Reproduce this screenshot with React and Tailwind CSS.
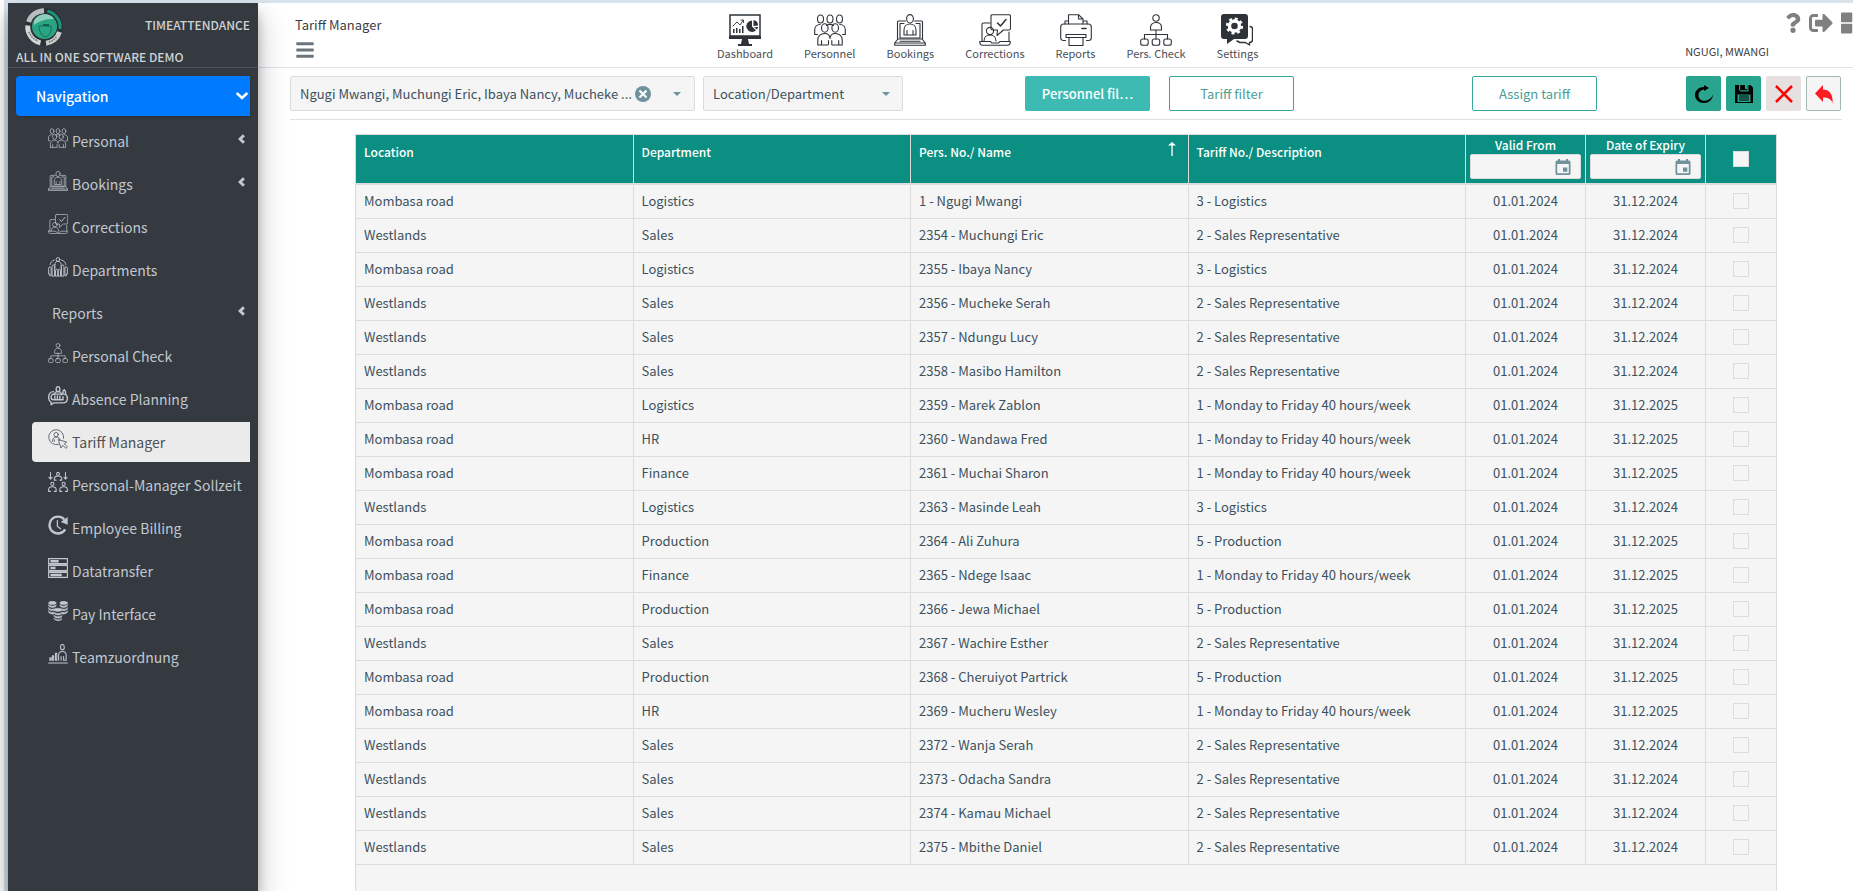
import { useState } from 'react'
import { FaBars, FaQuestion, FaSignOutAlt, FaThLarge } from 'react-icons/fa'

const Svg = ({ className, children, strokeWidth = 1.1 }) => (
  <svg viewBox="0 0 32 32" className={className} fill="none" stroke="currentColor" strokeWidth={strokeWidth} strokeLinecap="round" strokeLinejoin="round" aria-hidden="true">
    {children}
  </svg>
)

const DashboardIcon = ({ className }) => (
  <Svg className={className}>
    <path d="M1 1h30v21H1z" strokeWidth="1.500" strokeLinejoin="miter" />
    <path d="M0 22h32v3H0zM13 25h6l1 5h3v2H9v-2h3z" fill="currentColor" stroke="none" />
    <path d="M4 15h1.500v4H4zM7 14h1.500v5H7zM10 15h1.500v4H10zM13 12h1.500v7H13z" fill="currentColor" stroke="none" />
    <path d="M4 12l4-4 3 3 3-4.500M12 6h2.500v2.500" strokeWidth=".9" />
    <path d="M23 6.500a5.700 5.700 0 1 0 4 9.800L23 12.500z" fill="currentColor" stroke="none" />
    <path d="M24.500 6a5.500 5.500 0 0 1 4.500 5.500l-4.500.5zM25 13.300l4-.4a5 5 0 0 1-1 2.500z" fill="currentColor" stroke="none" />
  </Svg>
)

const PersonnelIcon = ({ className }) => (
  <Svg className={className}>
    <ellipse cx="6.500" cy="5" rx="3" ry="4" />
    <ellipse cx="16" cy="5" rx="3" ry="4" />
    <ellipse cx="25.500" cy="5" rx="3" ry="4" />
    <path d="M3.500 20.500H.700v-4.500c0-3 2-5.500 5.500-5.500M28.500 20.500h2.800v-4.500c0-3-2-5.500-5.500-5.500M12.500 11.500c2-1.300 5-1.300 7 0" />
    <ellipse cx="10.800" cy="14" rx="3.300" ry="4.200" />
    <ellipse cx="21.200" cy="14" rx="3.300" ry="4.200" />
    <path d="M3.800 31v-5.500c0-3.500 3-6 7-6s5 2.500 5.200 5c.2-2.500 1.500-5 5.200-5s7 2.500 7 6V31h-10M3.800 31h10M7.500 30.500v-4M14.500 30.500v-4M17.800 30.500v-4M24.700 30.500v-4" />
  </Svg>
)

const BookingsIcon = ({ className }) => (
  <Svg className={className}>
    <ellipse cx="16" cy="4.800" rx="3.400" ry="4.200" />
    <path d="M10 21v-5c0-3.500 2.500-6 6-6s6 2.500 6 6v5zM13 20.500v-4M19 20.500v-4" />
    <path d="M11.500 7H4.500C4 7 3.500 7.500 3.500 8v17h25V8c0-.5-.5-1-1-1h-7" />
    <path d="M10 9.500H6V24h20V9.500h-4" />
    <path d="M3.500 25.500L.700 29v2.300h30.600V29l-2.800-3.500M1 29h30M6 27.300h20" />
  </Svg>
)

const CorrectionsIcon = ({ className }) => (
  <Svg className={className}>
    <path d="M13.500.700H30c1 0 1.500.5 1.500 1.200v12.600c0 1-.5 1.500-1.500 1.500h-5.500L18 21.500l.5-5.500H13.500c-1 0-1.500-.5-1.500-1.500V1.900c0-.7.5-1.200 1.500-1.200z" />
    <path d="M18.500 9l3 3 5.500-6.500" strokeWidth="1.500" />
    <path d="M11 9H4.500C3.500 9 3 9.500 3 10.500V27M30 18v9" />
    <circle cx="11" cy="17" r="3.600" />
    <path d="M5 27c0-3.500 2.500-6 6-6s6 2.500 6 6" />
    <path d="M.700 27.500h11l1 1.500h7l1-1.500h10.600c0 2.500-.8 3.800-3 3.800H3.700c-2.200 0-3-1.300-3-3.800z" />
  </Svg>
)

const PrinterIcon = ({ className }) => (
  <Svg className={className}>
    <path d="M8.500 10V.700h10L23 5v5M18.500.700V5H23M5 10V7h3M27 10V7h-3.500" />
    <path d="M5.500 26.500H3.500C2 26.500.700 25.500.700 24V13c0-1.700 1-3 3-3h24.600c2 0 3 1.300 3 3v11c0 1.500-1.300 2.500-2.800 2.500h-2" />
    <path d="M22 14.500h4" strokeWidth="1.600" />
    <path d="M6 20.500h20v3H6zM9 23.500h14v8H9z" />
  </Svg>
)

const OrgIcon = ({ className }) => (
  <Svg className={className}>
    <circle cx="16" cy="4" r="3.200" />
    <path d="M10.500 16v-2.500c0-3 2.300-5 5.500-5s5.500 2 5.500 5V16zM16 16v9M4.500 25v-4.500h23V25" />
    <rect x=".7" y="25" width="7.500" height="6.300" rx="2" />
    <rect x="12.200" y="25" width="7.500" height="6.300" rx="2" />
    <rect x="23.800" y="25" width="7.500" height="6.300" rx="2" />
  </Svg>
)

const SettingsIcon = ({ className }) => (
  <Svg className={className}>
    <path d="M3 0h21a3 3 0 0 1 3 3v19a3 3 0 0 1-3 3H13l-7 5v-5H3a3 3 0 0 1-3-3V3a3 3 0 0 1 3-3z" fill="currentColor" stroke="none" />
    <circle cx="13.500" cy="12" r="5" stroke="#fff" strokeWidth="3.400" />
    <circle cx="13.500" cy="12" r="7.200" stroke="#fff" strokeWidth="2.800" strokeDasharray="2.830 2.830" strokeLinecap="butt" />
    <path d="M29 12.500c2 0 2.500 1 2.500 2.500v11c0 2-1 2.500-3 2.500V31l-4-2.500h-5.500l-3-1.500" strokeWidth="1.400" />
  </Svg>
)

const DepartmentsIcon = ({ className }) => (
  <Svg className={className} strokeWidth={1.500}>
    <circle cx="16" cy="4" r="3" />
    <path d="M11 12c0-3 2-5 5-5s5 2 5 5v6M11 12v6M10 5C6 6 4 9 3.500 12M22 5c4 1 6 4 6.500 7" />
    <path d="M1 27V18c0-3 4-3 4 0v12H2.500v-3M6.500 30V15c0-3 4-3 4 0v15zM12 30V21c0-2 3.500-2 3.500 0v9zM16.500 30V21c0-2 3.500-2 3.500 0v9zM21.500 30V15c0-3 4-3 4 0v15zM31 27V18c0-3-4-3-4 0v12h2.500v-3" />
  </Svg>
)

const AbsenceIcon = ({ className }) => (
  <Svg className={className} strokeWidth={2.200}>
    <ellipse cx="16" cy="5" rx="3" ry="4" />
    <path d="M10 14c0-3 3-5 6-5s6 2 6 5M24 12V8l2-2 2 3v5M9 9c-5 0-8 4-8 9s2 7 4 8v4l4-3h15c4 0 7-2 7-7s-3-7-6-7H9c-3 0-4 2-4 5s2 4 4 4h15" />
    <path d="M11 16v5M15 16v5M19 16v5M24 17v4" />
  </Svg>
)

const TariffIcon = ({ className }) => (
  <Svg className={className} strokeWidth={1.300}>
    <path d="M17 24.500A12 12 0 1 1 25 15" />
    <circle cx="13" cy="9" r="3.500" />
    <path d="M7 20c0-4 2-7 6-7s6 2 6 5M10 20v-3" />
    <path d="M17 17l13 4-4 2.500 5 5-2.500 2.500-5-5L21 30z" />
  </Svg>
)

const TargetTimeIcon = ({ className }) => (
  <Svg className={className} strokeWidth={1.700}>
    <circle cx="16" cy="3" r="2.300" />
    <path d="M10 13v-2c0-3 2.500-4.500 6-4.500s6 1.500 6 4.500v2h-3M10 13h3M4 1v10M1.500 8.500L4 11.500l2.500-3M28 1v10M25.500 8.500l2.500 3 2.500-3" />
    <circle cx="7" cy="19" r="2.500" />
    <circle cx="25" cy="19" r="2.500" />
    <path d="M1 31v-3c0-3 2.500-4.500 6-4.500s6 1.500 6 4.500v3h-3M1 31h3M19 31v-3c0-3 2.500-4.500 6-4.500s6 1.500 6 4.500v3h-3M19 31h3" />
  </Svg>
)

const BillingIcon = ({ className }) => (
  <Svg className={className} strokeWidth={3.800}>
    <path d="M27.500 23A13.500 13.500 0 1 1 26 7" strokeLinecap="butt" />
    <path d="M31.500 3v12.500L20.500 11z" fill="currentColor" stroke="none" />
    <path d="M15 9v9l5 4" strokeWidth="2" />
  </Svg>
)

const DataIcon = ({ className }) => (
  <Svg className={className} strokeWidth={1.800}>
    <path d="M1 1h30v8H1zM1 12h30v8H1zM1 23h30v8H1z" strokeLinejoin="miter" />
    <path d="M4 3h13v4H4zM4 14h8v4H4zM4 25h18v4H4z" fill="currentColor" stroke="none" />
    <path d="M1 10.500h30M1 21.500h30" strokeWidth="1.400" />
  </Svg>
)

const PayIcon = ({ className }) => (
  <Svg className={className} strokeWidth={1}>
    <g fill="currentColor">
      <ellipse cx="7" cy="3" rx="6" ry="2.500" />
      <ellipse cx="25" cy="3" rx="6" ry="2.500" />
      <path d="M1 6c2 3 10 3 12 0v2c-2 3-10 3-12 0zM1 11c2 3 8 3 9 1v3c-3 1-8 0-9-2zM1 16c2 3 7 3 8 2v3c-3 0-7-1-8-3zM31 6c-2 3-10 3-12 0v2c2 3 10 3 12 0zM31 11c-2 3-8 3-9 1v3c3 1 8 0 9-2zM31 16c-2 3-7 3-8 2v3c3 0 7-1 8-3z" />
      <ellipse cx="16" cy="14" rx="6" ry="2.500" />
      <path d="M10 18c2 3 10 3 12 0v2c-2 3-10 3-12 0zM10 23c2 3 10 3 12 0v2c-2 3-10 3-12 0zM10 28c2 3 10 3 12 0v1c-2 3-10 3-12 0z" />
    </g>
  </Svg>
)

const TeamIcon = ({ className }) => (
  <Svg className={className} strokeWidth={1.700}>
    <ellipse cx="23" cy="5" rx="3" ry="4.300" />
    <path d="M17 26v-8c0-4 2-6 6-6s6 2 6 6v8h-4v-6M21 26v-6" />
    <path d="M3 22h2v4H3zM7 19h2v7H7zM12 15h2v11h-2zM1 30.500h30" />
  </Svg>
)

const ChevronLeftIcon = ({ className }) => (
  <Svg className={className} strokeWidth={8}>
    <path d="M21 6L11 16l10 10" strokeLinecap="butt" strokeLinejoin="miter" />
  </Svg>
)

const ChevronDownIcon = ({ className }) => (
  <Svg className={className} strokeWidth={7}>
    <path d="M4 10l12 11 12-11" strokeLinejoin="miter" />
  </Svg>
)

const CalendarIcon = () => (
  <svg viewBox="0 0 16 16" className="size-4" fill="#6f929d" aria-hidden="true">
    <path d="M3 0h2v1.500h6V0h2v1.500h1A1.500 1.500 0 0 1 15.500 3v11.500A1.500 1.500 0 0 1 14 16H2A1.500 1.500 0 0 1 .5 14.500V3A1.500 1.500 0 0 1 2 1.500h1zM2.200 5v9.300h11.600V5zM8 8.500h4.300v4.200H8z" fillRule="evenodd" />
  </svg>
)

const Caret = ({ className }) => (
  <svg viewBox="0 0 8 4" className={className} fill="#6f929d" aria-hidden="true">
    <path d="M0 0h8L4 4z" />
  </svg>
)

const Logo = () => (
  <svg viewBox="0 0 40 40" className="size-10" aria-hidden="true">
    <circle cx="20" cy="20" r="19" fill="#2b3036" />
    <g fill="none" strokeWidth="5">
      <path d="M4.500 15A16.300 16.300 0 0 1 20 3.700" stroke="#b9bcbc" />
      <path d="M23.500 4.100A16.300 16.300 0 0 1 36 22" stroke="#1c9479" strokeWidth="3" />
      <path d="M35.500 25A16.300 16.300 0 0 1 22 36.200" stroke="#c9cccb" />
      <path d="M16.500 35.900A16.300 16.300 0 0 1 3.800 18.500" stroke="#d3d6d5" />
    </g>
    <path d="M5 25a15.500 15.500 0 0 0 9 9M25 35a15 15 0 0 0 8-6" stroke="#6d7475" strokeWidth="1.500" strokeDasharray="1.500 1" fill="none" />
    <circle cx="20.500" cy="19.500" r="12.500" fill="#2aa584" />
    <path d="M10 14c4-8 16-9 20-2-8 0-13 1-20 6z" fill="#8ecdb9" />
    <path d="M15 19h12c1 6-2 10-6 11-4-2-6-6-6-11z" fill="none" stroke="#176b58" />
    <path d="M19 17h6v2h-6z" fill="#155e4e" />
  </svg>
)

const navItems = [
  { label: 'Personal', icon: PersonnelIcon, more: true },
  { label: 'Bookings', icon: BookingsIcon, more: true },
  { label: 'Corrections', icon: CorrectionsIcon },
  { label: 'Departments', icon: DepartmentsIcon },
  { label: 'Reports', more: true },
  { label: 'Personal Check', icon: OrgIcon },
  { label: 'Absence Planning', icon: AbsenceIcon },
  { label: 'Tariff Manager', icon: TariffIcon, active: true },
  { label: 'Personal-Manager Sollzeit', icon: TargetTimeIcon },
  { label: 'Employee Billing', icon: BillingIcon },
  { label: 'Datatransfer', icon: DataIcon },
  { label: 'Pay Interface', icon: PayIcon },
  { label: 'Teamzuordnung', icon: TeamIcon },
]

const shortcuts = [
  { label: 'Dashboard', icon: DashboardIcon },
  { label: 'Personnel', icon: PersonnelIcon },
  { label: 'Bookings', icon: BookingsIcon },
  { label: 'Corrections', icon: CorrectionsIcon },
  { label: 'Reports', icon: PrinterIcon },
  { label: 'Pers. Check', icon: OrgIcon },
  { label: 'Settings', icon: SettingsIcon },
]

const tariffs = {
  1: '1 - Monday to Friday 40 hours/week',
  2: '2 - Sales Representative',
  3: '3 - Logistics',
  5: '5 - Production',
}

// location, department, number, name, tariff, year of expiry
const rows = [
  ['Mombasa road', 'Logistics', 1, 'Ngugi Mwangi', 3, 2024],
  ['Westlands', 'Sales', 2354, 'Muchungi Eric', 2, 2024],
  ['Mombasa road', 'Logistics', 2355, 'Ibaya Nancy', 3, 2024],
  ['Westlands', 'Sales', 2356, 'Mucheke Serah', 2, 2024],
  ['Westlands', 'Sales', 2357, 'Ndungu Lucy', 2, 2024],
  ['Westlands', 'Sales', 2358, 'Masibo Hamilton', 2, 2024],
  ['Mombasa road', 'Logistics', 2359, 'Marek Zablon', 1, 2025],
  ['Mombasa road', 'HR', 2360, 'Wandawa Fred', 1, 2025],
  ['Mombasa road', 'Finance', 2361, 'Muchai Sharon', 1, 2025],
  ['Westlands', 'Logistics', 2363, 'Masinde Leah', 3, 2024],
  ['Mombasa road', 'Production', 2364, 'Ali Zuhura', 5, 2025],
  ['Mombasa road', 'Finance', 2365, 'Ndege Isaac', 1, 2025],
  ['Mombasa road', 'Production', 2366, 'Jewa Michael', 5, 2025],
  ['Westlands', 'Sales', 2367, 'Wachire Esther', 2, 2024],
  ['Mombasa road', 'Production', 2368, 'Cheruiyot Partrick', 5, 2025],
  ['Mombasa road', 'HR', 2369, 'Mucheru Wesley', 1, 2025],
  ['Westlands', 'Sales', 2372, 'Wanja Serah', 2, 2024],
  ['Westlands', 'Sales', 2373, 'Odacha Sandra', 2, 2024],
  ['Westlands', 'Sales', 2374, 'Kamau Michael', 2, 2024],
  ['Westlands', 'Sales', 2375, 'Mbithe Daniel', 2, 2024],
]

function Sidebar() {
  return (
    <aside className="relative z-10 w-[250px] shrink-0 bg-[#343a40] text-[#c2c7d0] shadow-[0_14px_28px_rgba(0,0,0,0.25),0_10px_10px_rgba(0,0,0,0.22)]">
      <div className="flex h-[65px] flex-col justify-between border-b border-[#4b545c] px-2 pt-1 pb-0.5 text-xs font-medium text-[#d0d3d6]">
        <div className="flex items-start justify-between pl-2">
          <Logo />
          <span className="pt-2 leading-5">TIMEATTENDANCE</span>
        </div>
        <span className="leading-5">ALL IN ONE SOFTWARE DEMO</span>
      </div>
      <nav className="p-2 text-sm font-normal">
        <a href="#" className="mb-[5px] flex h-10 items-center justify-between rounded-l bg-[#007bff] pr-0.5 pl-5 font-medium text-white shadow-sm">
          Navigation
          <ChevronDownIcon className="size-3" />
        </a>
        <ul className="flex flex-col gap-[3px] pl-4">
          {navItems.map(({ label, icon: Icon, more, active }) => (
            <li key={label}>
              <a
                href="#"
                className={
                  active
                    ? 'flex h-10 items-center gap-1 rounded-l bg-[#ebebeb] pr-0.5 pl-4 whitespace-nowrap text-[#4b5157]'
                    : 'flex h-10 items-center gap-1 rounded-l pr-0.5 pl-4 whitespace-nowrap'
                }
              >
                {Icon && <Icon className="mb-1.5 size-5 shrink-0" />}
                <span className={Icon ? 'flex-1' : 'flex-1 pl-1'}>{label}</span>
                {more && <ChevronLeftIcon className="mb-1 size-3" />}
              </a>
            </li>
          ))}
        </ul>
      </nav>
    </aside>
  )
}

function Header() {
  return (
    <header className="flex h-[65px] overflow-hidden border-b border-[#dee2e6] pl-[37px]">
      <div className="flex w-[422px] shrink-0 flex-col gap-[5px] pt-3">
        <h1 className="text-[13px] leading-5 text-[#3b4045]">Tariff Manager</h1>
        <button type="button" aria-label="Toggle navigation" className="flex w-5 text-[#6c757d]">
          <FaBars className="size-5" />
        </button>
      </div>
      <nav className="flex gap-[31px] pt-[11px] text-[11px] text-[#495057]">
        {shortcuts.map(({ label, icon: Icon }) => (
          <a key={label} href="#" className="flex flex-col items-center leading-[14px]">
            <Icon className="size-8 text-[#2d3338]" />
            {label}
          </a>
        ))}
      </nav>
      <div className="ml-auto flex shrink-0 gap-3.5 pt-2">
        <span className="self-end pb-2 text-[11px] leading-4 text-[#3d3d3d]">NGUGI, MWANGI</span>
        <button type="button" aria-label="Help" className="flex h-6 items-center text-[#808080]">
          <FaQuestion className="size-5" />
        </button>
        <div className="-mr-3 -ml-2 flex gap-2 text-[#808080]">
          <button type="button" aria-label="Log out" className="flex h-6 items-center">
            <FaSignOutAlt className="size-6" />
          </button>
          <button type="button" aria-label="Apps" className="flex h-6 items-center">
            <FaThLarge className="size-6" />
          </button>
        </div>
      </div>
    </header>
  )
}

function Toolbar() {
  const [persons, setPersons] = useState('Ngugi Mwangi, Muchungi Eric, Ibaya Nancy, Mucheke ...')
  const outline = 'h-[35px] w-[125px] rounded-xs border border-[#35a79c] bg-white text-[#4a9d95]'

  return (
    <div className="mr-[11px] ml-8 flex border-b border-[#dee2e6] py-2 text-[13px] text-[#3c515d]">
      <div className="flex h-[35px] w-[405px] items-center rounded-xs border border-[#dcdcdc] bg-[#f5f5f5] pr-3 pl-[9px]">
        <input
          aria-label="Persons"
          readOnly
          value={persons}
          className="min-w-0 flex-1 text-ellipsis outline-none"
        />
        <button type="button" aria-label="Clear persons" onClick={() => setPersons('')} className="mr-[22px]">
          <svg viewBox="0 0 16 16" className="size-4">
            <circle cx="8" cy="8" r="8" fill="#6f929d" />
            <path d="M4.500 4.500l7 7M11.500 4.500l-7 7" stroke="#fff" strokeWidth="2.200" />
          </svg>
        </button>
        <Caret className="mr-px w-2" />
      </div>
      <div className="relative ml-2 w-[200px]">
        <select aria-label="Location/Department" className="h-[35px] w-full appearance-none rounded-xs border border-[#dcdcdc] bg-[#f5f5f5] pl-[9px]">
          <option>Location/Department</option>
        </select>
        <Caret className="pointer-events-none absolute top-4 right-[13px] w-2" />
      </div>
      <button type="button" className="ml-[122px] h-[35px] w-[125px] rounded-xs bg-[#3dbab2] font-medium whitespace-nowrap text-white">Personnel fil…</button>
      <button type="button" className={`${outline} ml-[19px]`}>Tariff filter</button>
      <button type="button" className={`${outline} mr-[89px] ml-auto`}>Assign tariff</button>
      <div className="mr-px flex gap-[5px]">
        <button type="button" aria-label="Refresh" className="flex size-[35px] items-center justify-center rounded-xs bg-[#28a48f]">
          <svg viewBox="0 0 18 18" className="size-[18px]">
            <path d="M9 0l5 3-5 3V4.600C5.500 5 3.500 7.500 3.500 10.200c0 3.300 2.500 5.600 6 5.600 4 0 7-2.400 8.200-6.300C18.200 14 14 18 9 18S0 14.500 0 10c0-4.500 4-8 9-8z" />
          </svg>
        </button>
        <button type="button" aria-label="Save" className="flex size-[35px] items-center justify-center rounded-xs bg-[#28a48f]">
          <svg viewBox="0 0 18 18" className="size-[18px]">
            <path d="M0 0h15.500L18 2.500V18H0z" />
            <path d="M4 0h1.200v6.500H13.500V0h-1.200v5.300H4zM10 0h2v4h-2zM2.500 9.500h13v7.500h-13z" fill="#28a48f" />
            <path d="M4 11h10M4 13h10M4 15h10" stroke="#000" strokeWidth="1.100" />
          </svg>
        </button>
        <button type="button" aria-label="Cancel" className="flex size-[35px] items-center justify-center rounded-xs bg-[#e6e0e0]">
          <svg viewBox="0 0 18 18" className="size-[18px]">
            <path d="M1 1l16 16M17 1L1 17" stroke="#f00" strokeWidth="2.600" />
          </svg>
        </button>
        <button type="button" aria-label="Back" className="flex size-[35px] items-center justify-center rounded-xs border border-[#a3b8b5] bg-[#f5f5f5]">
          <svg viewBox="0 0 18 18" className="size-[18px]">
            <path d="M0 8.500L8 0v4.500c6 .2 10 4 9.700 13.500-2-4-4.500-5.500-9.700-5.500v4.500z" fill="#fe1c24" />
          </svg>
        </button>
      </div>
    </div>
  )
}

function DateFilter({ id, label }) {
  return (
    <div className="flex flex-col px-1">
      <label htmlFor={id} className="text-center leading-[19px]">{label}</label>
      <span className="flex h-[25px] items-center rounded-xs border border-[#dcdcdc] bg-[#f5f5f5] pr-[9px] pl-2">
        <input id={id} type="text" className="min-w-0 flex-1 font-normal text-[#3c515d] outline-none" />
        <button type="button" aria-label={`Pick date: ${label}`}>
          <CalendarIcon />
        </button>
      </span>
    </div>
  )
}

function TariffTable() {
  const [selected, setSelected] = useState([])
  const all = selected.length === rows.length

  const toggle = (no) => {
    setSelected(selected.includes(no) ? selected.filter((n) => n !== no) : [...selected, no])
  }

  const head = 'border-r border-b-2 border-[#dcdcdc] px-2 pt-[7px] text-left align-top font-medium leading-5'
  const dateHead = 'border-r border-b-2 border-[#dcdcdc] p-0 align-top font-medium'
  const cell = 'border-r border-b border-[#dcdcdc] px-2 pt-0 pb-0.5'
  const box = 'mx-auto block size-4 appearance-none border border-[#dcdcdc] bg-[#f5f5f5] checked:bg-[#0a8f82]'

  return (
    <div className="mt-3.5 mr-[76px] ml-[97px] flex-1 border border-b-0 border-[#dcdcdc] bg-[#f5f5f5]">
      <table className="w-full table-fixed border-separate border-spacing-0 text-[13px] text-[#3c515d]">
        <colgroup>
          <col />
          <col />
          <col />
          <col />
          <col className="w-[120px]" />
          <col className="w-[120px]" />
          <col className="w-[70px]" />
        </colgroup>
        <thead className="bg-[#0a8f82] text-xs text-white">
          <tr className="h-[50px]">
            <th className={head}>Location</th>
            <th className={head}>Department</th>
            <th className={head}>
              <div className="flex justify-between pr-1">
                Pers. No./ Name
                <svg viewBox="0 0 8 14" className="h-3.5 w-2" fill="#fff" aria-label="sorted ascending">
                  <path d="M4 0L0 3.500h3.400V14h1.300V3.500H8z" />
                </svg>
              </div>
            </th>
            <th className={head}>Tariff No./ Description</th>
            <th className={dateHead}>
              <DateFilter id="valid-from" label="Valid From" />
            </th>
            <th className={dateHead}>
              <DateFilter id="expiry" label="Date of Expiry" />
            </th>
            <th className="border-b-2 border-[#dcdcdc] p-0 align-middle">
              <input
                type="checkbox"
                aria-label="Select all"
                checked={all}
                onChange={() => setSelected(all ? [] : rows.map((row) => row[2]))}
                className={box}
              />
            </th>
          </tr>
        </thead>
        <tbody>
          {rows.map(([location, department, no, name, tariff, year]) => (
            <tr key={no} className="h-[34px] leading-5">
              <td className={cell}>{location}</td>
              <td className={cell}>{department}</td>
              <td className={cell}>{no} - {name}</td>
              <td className={cell}>{tariffs[tariff]}</td>
              <td className={`${cell} text-center`}>01.01.2024</td>
              <td className={`${cell} text-center`}>31.12.{year}</td>
              <td className="border-b border-[#dcdcdc] p-0 pb-px">
                <input type="checkbox" aria-label={`Select ${name}`} checked={selected.includes(no)} onChange={() => toggle(no)} className={box} />
              </td>
            </tr>
          ))}
        </tbody>
      </table>
    </div>
  )
}

export default function App() {
  return (
    <div className="flex min-h-screen flex-col bg-white pl-1 font-['Noto_Sans_CJK_SC',sans-serif]">
      <div className="h-[3px] shrink-0 bg-[#dae4ed]" />
      <div className="flex flex-1 border-l-4 border-[#dae4ed]">
        <Sidebar />
        <main className="flex min-w-0 flex-1 flex-col">
          <Header />
          <Toolbar />
          <TariffTable />
        </main>
      </div>
    </div>
  )
}
